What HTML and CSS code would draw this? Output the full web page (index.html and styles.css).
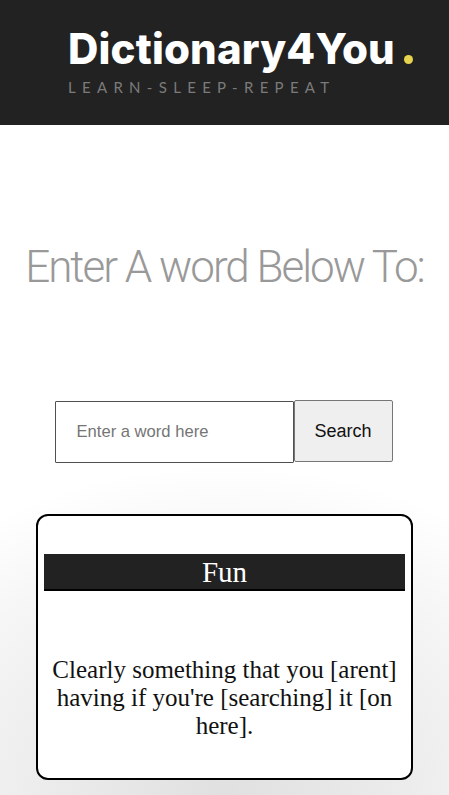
FILE: index.html
```html
<!DOCTYPE html>
<html lang="en">
<head>
<meta charset="utf-8">
<title>Dictionary4You</title>
<link rel="stylesheet" href="styles.css">
</head>
<body>
<header class="site-header">
  <div class="brand">
    <div class="logo">Dictionary4You<span class="logo-dot"></span></div>
    <div class="tagline">LEARN-SLEEP-REPEAT</div>
  </div>
</header>
<main class="main">
  <h1 class="title">Enter A word Below To:</h1>
  <form class="search" onsubmit="return false">
    <input class="search-input" type="text" placeholder="Enter a word here">
    <button class="search-btn" type="submit">Search</button>
  </form>
  <section class="card">
    <h2 class="card-word">Fun</h2>
    <p class="card-def">Clearly something that you [arent] having if you're [searching] it [on here].</p>
  </section>
</main>
</body>
</html>
```
FILE: styles.css
```css
html, body {
  margin: 0;
  padding: 0;
}
body {
  background: #fff;
  min-height: 795px;
}
.site-header {
  background: #222222;
  height: 125px;
  box-sizing: border-box;
  padding: 24px 0 0 68px;
}
.brand {
  display: flex;
  flex-direction: column;
}
.logo {
  font-family: Inter, "Open Sans", sans-serif;
  font-weight: 800;
  font-size: 42px;
  line-height: 50px;
  color: #ffffff;
  letter-spacing: 0.15px;
  display: flex;
  align-items: baseline;
}
.logo-dot {
  display: inline-block;
  width: 9px;
  height: 9px;
  border-radius: 50%;
  background: #e6d34f;
  margin-left: 9px;
}
.tagline {
  font-family: Lato, sans-serif;
  font-size: 15px;
  line-height: 20px;
  letter-spacing: 6.3px;
  color: #7b7b7b;
  margin-top: 3px;
}
.main {
  display: flex;
  flex-direction: column;
  align-items: center;
  min-height: 670px;
  background: radial-gradient(ellipse 420px 330px at 50% 670px, #e0e0e0 0%, #ebebeb 40%, #f6f6f6 75%, #ffffff 100%);
  padding-bottom: 20px;
}
.title {
  font-family: Roboto, sans-serif;
  font-weight: 300;
  font-size: 44px;
  line-height: 52px;
  letter-spacing: -2px;
  color: #999999;
  margin: 116px 0 0;
  text-align: center;
}
.search {
  display: flex;
  align-items: flex-start;
  margin-top: 107px;
  margin-right: 2px;
}
.search-input {
  box-sizing: border-box;
  width: 239px;
  height: 62px;
  margin: 1px 0 0;
  border: 1px solid #505050;
  border-radius: 1px;
  background: rgba(255,255,255,0.5);
  padding: 0 0 0 21px;
  font-family: "Liberation Sans", Arial, sans-serif;
  font-size: 16.6px;
  color: #222;
  outline: none;
}
.search-input::placeholder {
  color: #757575;
}
.search-btn {
  box-sizing: border-box;
  width: 99px;
  height: 62px;
  margin: 0;
  border: 1px solid #767676;
  border-radius: 2px;
  background: #efefef;
  font-family: "Liberation Sans", Arial, sans-serif;
  font-size: 18px;
  color: #111;
  padding: 0;
}
.card {
  box-sizing: border-box;
  width: 377px;
  margin-top: 51px;
  border: 2px solid #000;
  border-radius: 12px;
  background: #fff;
  padding: 38px 6px 38px;
}
.card-word {
  margin: 0;
  height: 35px;
  background: #222222;
  border-bottom: 2px solid #000;
  color: #fff;
  font-family: "Liberation Serif", "Times New Roman", serif;
  font-weight: 400;
  font-size: 29px;
  line-height: 36px;
  text-align: center;
}
.card-def {
  margin: 65px 0 0;
  font-family: "Liberation Serif", "Times New Roman", serif;
  font-size: 25px;
  line-height: 28px;
  color: #111;
  text-align: center;
}
```
